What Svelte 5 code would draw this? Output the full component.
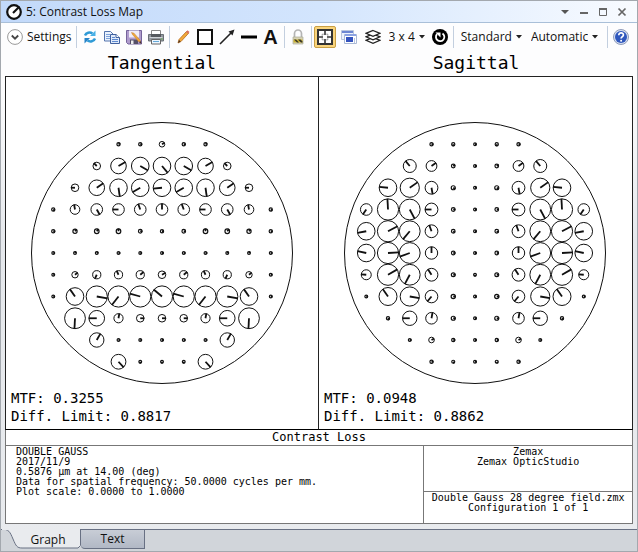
<script>
    let layout = '3 x 4'
    let lineStyle = 'Standard'
    let scaling = 'Automatic'
    let tab = 'Graph'

    // one entry per pupil point: [radius, clock angle], the right half mirrors the left
    const tangential = [
        [null, null, null, [2, 60], [2, 90], [3, 60]],
        [null, null, [4, 315], [8, 60], [9, 120], [9, 140]],
        [null, [4, 270], [8, 55], [9, 172], [9, 240], [9, 265]],
        [[2, 130], [5, 350], [6, 150], [6, 270], [6, 340], [6, 0]],
        [[2, 90], [2.5, 40], [2.7, 40], [2.7, 0], [2.2, 90], [2, 90]],
        [[1.8, 90], [1.8, 30], [1.8, 60], [1.8, 90], [1.8, 90], [1.8, 90]],
        [[1.8, 90], [3.4, 50], [4.3, 205], [4.3, 335], [4.3, 50], [4, 60]],
        [[1.8, 90], [9, 325], [10.8, 100], [10.8, 218], [10.8, 285], [10.8, 310]],
        [null, [10.6, 183], [8, 270], [4.8, 10], [4, 90], [4, 90]],
        [null, null, [7.4, 30], [1.8, 90], [1.8, 90], [1.8, 90]],
        [null, null, null, [7.6, 137], [1.8, 180], [1.8, 180]]
    ]

    const sagittal = [
        [null, null, null, [2, 90], [2, 180], [1.7, 90]],
        [null, null, [6.7, 320], [5.6, 55], [2.2, 60], [1.8, 90]],
        [null, [9, 275], [9.8, 55], [6.6, 170], [2.4, 120], [1.8, 90]],
        [[6, 215], [10.8, 357], [10.6, 152], [6.6, 270], [2.2, 90], [1.8, 90]],
        [[9, 260], [10.8, 62], [10.6, 220], [6.6, 340], [2.2, 130], [1.8, 90]],
        [[9, 282], [10.8, 87], [10.6, 250], [6.4, 0], [2.2, 90], [1.8, 90]],
        [[5.2, 275], [10.8, 60], [10.6, 208], [6.6, 327], [2.3, 90], [1.8, 180]],
        [[1.8, 90], [9.2, 325], [9.8, 100], [6.5, 220], [2.5, 90], [1.8, 90]],
        [null, [2, 150], [7.4, 270], [6, 10], [2.4, 90], [1.8, 90]],
        [null, null, [1.8, 90], [3, 60], [2, 90], [1.8, 90]],
        [null, null, null, [2, 90], [1.9, 150], [1.8, 90]]
    ]

    const step = 21.75

    function points(rows) {
        let list = []
        rows.forEach((row, r) => {
            for (let c = 0; c < 11; c++) {
                const point = row[c > 5 ? 10 - c : c]
                if (!point) continue
                const x = 156 + (c - 5) * step
                const y = 131 + (r - 5) * step
                const a = point[1] * Math.PI / 180
                list.push({
                    x, y, r: point[0],
                    x2: x + Math.sin(a) * point[0],
                    y2: y - Math.cos(a) * point[0]
                })
            }
        })
        return list
    }

    const plots = [
        { name: 'Tangential', mtf: '0.3255', limit: '0.8817', points: points(tangential) },
        { name: 'Sagittal', mtf: '0.0948', limit: '0.8862', points: points(sagittal) }
    ]
</script>

<div class="window">
    <header class="titlebar">
        <svg width="18" height="18" viewBox="0 0 18 18" aria-hidden="true">
            <circle cx="9" cy="9" r="6.8" fill="#fff" stroke="#111" stroke-width="2.2" />
            <path d="M8 10 L14.5 3.5" stroke="#111" stroke-width="2.2" />
        </svg>
        <h1>5: Contrast Loss Map</h1>
        <div class="window-buttons">
            <button aria-label="Window menu"><svg width="10" height="10" viewBox="0 0 10 10"><path d="M1 3h8L5 7z" fill="#555" /></svg></button>
            <button aria-label="Minimize"><svg width="10" height="10" viewBox="0 0 10 10"><path d="M1 6h8" stroke="#666" stroke-width="2" /></svg></button>
            <button aria-label="Maximize"><svg width="10" height="10" viewBox="0 0 10 10"><path d="M1.5 2h7v6.500h-7z" fill="none" stroke="#666" /><path d="M1 2h8" stroke="#666" stroke-width="2" /></svg></button>
            <button aria-label="Close"><svg width="10" height="10" viewBox="0 0 10 10"><path d="M1.500 1.500l7 7M8.500 1.500l-7 7" stroke="#666" stroke-width="1.700" /></svg></button>
        </div>
    </header>

    <div class="toolbar" role="toolbar" aria-label="Graph tools">
        <button class="settings">
            <svg width="16" height="16" viewBox="0 0 16 16">
                <circle cx="8" cy="8" r="7.400" fill="#fff" stroke="#999" />
                <path d="M4.800 6.500L8 9.700l3.200-3.200" fill="none" stroke="#444" stroke-width="1.800" />
            </svg>
            <span>Settings</span>
        </button>
        <span class="sep"></span>
        <button class="tool" aria-label="Update">
            <svg width="16" height="16" viewBox="0 0 16 16" fill="none" stroke="#2f9ad6" stroke-width="2.400">
                <path d="M3 6.500C4 3.500 8 2.800 10.500 4.500" />
                <path d="M13.500 1.500v5.500H8z" fill="#48b0e6" stroke="none" />
                <path d="M13 9.500C12 12.500 8 13.200 5.500 11.500" />
                <path d="M2.500 14.500V9H8z" fill="#2683c8" stroke="none" />
            </svg>
        </button>
        <button class="tool" aria-label="Copy">
            <svg width="16" height="16" viewBox="0 0 16 16">
                <path d="M.5 2.500h6l3 3v6.500h-9z" fill="#eaf2fd" stroke="#5474ad" />
                <path d="M2 5.500h4M2 7.500h5M2 9.500h5" stroke="#7fa3dc" />
                <path d="M6.500 5.500h5.500l3.500 3v6h-9z" fill="#dfeafb" stroke="#40619f" />
                <path d="M12 5.500v3h3.500" fill="#fff" stroke="#40619f" />
                <path d="M8 8.500h3M8 10.500h6M8 12.500h6" stroke="#5e8ad0" />
            </svg>
        </button>
        <button class="tool" aria-label="Save">
            <svg width="16" height="16" viewBox="0 0 16 16">
                <path d="M.5 1.500h15v13.500H2L.5 13.500z" fill="#b09ccd" stroke="#75649b" />
                <path d="M3 1.500h10v7H3z" fill="#f1ecf8" />
                <path d="M4 10.500h8V15H4z" fill="#565068" /><path d="M5 11.500h2.500V15H5z" fill="#eee" />
                <path d="M5.500 3.500l1 2 6.500 7.500 1.500-1.300L8 4.200z" fill="#f0a638" stroke="#c07c2d" stroke-width=".5" />
                <path d="M13 13.300l2.500 1.700-.7-3z" fill="#503324" />
            </svg>
        </button>
        <button class="tool" aria-label="Print">
            <svg width="16" height="16" viewBox="0 0 16 16">
                <path d="M3.500 1.500h9v5h-9z" fill="#fff" stroke="#888" />
                <path d="M.5 5.500h15v6.500H.5z" fill="#94999f" stroke="#6a7076" />
                <path d="M3 5h10v3H3z" fill="#55595e" /><path d="M1.500 8.500h13" stroke="#cfd3d7" />
                <path d="M3.500 10.500h9v4.500h-9z" fill="#edf6ff" stroke="#666" />
                <path d="M5 12.500h6" stroke="#66a9d8" /><path d="M13 10h1.500" stroke="#5dbb45" />
            </svg>
        </button>
        <span class="sep"></span>
        <button class="tool" aria-label="Draw">
            <svg width="16" height="16" viewBox="0 0 16 16">
                <path d="M3 14l1-3.500 7.500-8 2 1.800-7.500 8.200z" fill="#f2aa3a" stroke="#b5681e" stroke-width=".8" />
                <path d="M11 3l1.500-1.800 2 1.700L13 4.800z" fill="#d97060" />
                <path d="M3 14l1-3 1.700 1.500z" fill="#4b3526" />
            </svg>
        </button>
        <button class="tool" aria-label="Rectangle">
            <svg width="16" height="16" viewBox="0 0 16 16"><path d="M1 1h14v14H1z" fill="#fff" stroke="#111" stroke-width="2" /></svg>
        </button>
        <button class="tool" aria-label="Arrow">
            <svg width="16" height="16" viewBox="0 0 16 16"><path d="M1 15L12 4" stroke="#222" stroke-width="1.600" /><path d="M15.500.5L13.500 6.500 9.500 2.500z" fill="#222" /></svg>
        </button>
        <button class="tool" aria-label="Line">
            <svg width="16" height="16" viewBox="0 0 16 16"><path d="M0 8h16" stroke="#000" stroke-width="3" /></svg>
        </button>
        <button class="tool letter" aria-label="Text annotation">A</button>
        <span class="sep"></span>
        <button class="tool" aria-label="Lock">
            <svg width="16" height="16" viewBox="0 0 16 16">
                <path d="M4.500 9V4.500a3.500 3.500 0 0 1 7 0V9" fill="none" stroke="#b4b4b4" stroke-width="1.700" />
                <path d="M3 8h10v7H3z" fill="#d8d3b4" stroke="#aaa999" stroke-width=".7" />
                <path d="M3.500 10.500h9v3h-9z" fill="#c8b030" />
                <path d="M4 10.500l3 3h2l-3-3M8 10.500l3 3h1.500v-1l-2-2" fill="#383629" />
            </svg>
        </button>
        <span class="sep"></span>
        <div class="views">
            <button class="tool active" aria-label="Fit to window" aria-pressed="true">
                <svg width="16" height="16" viewBox="0 0 16 16">
                    <path d="M1 1h14v14H1z" fill="#fff" stroke="#333" stroke-width="2" />
                    <path d="M8 2v4M8 10v4M2 8h4M10 8h4" stroke="#333" stroke-width="1.600" />
                    <path d="M6 4.500v1.500H4.500M10 4.500v1.500h1.500M6 11.500V10H4.500M10 11.500V10h1.500" fill="none" stroke="#777" stroke-width=".8" />
                </svg>
            </button>
            <button class="tool" aria-label="Clone window">
                <svg width="16" height="16" viewBox="0 0 16 16">
                    <path d="M.5 1.500h12v9H.5z" fill="#eef3fc" stroke="#b9c5dc" /><path d="M1 2h11v2H1z" fill="#6d87d2" />
                    <path d="M3.500 5.500h12v9h-12z" fill="#fff" stroke="#aab9d5" /><path d="M4 5h11v2H4z" fill="#8ca3e2" />
                    <path d="M5 8h7v5H5z" fill="#3453bd" /><path d="M13.500 9v5" stroke="#b8c5df" />
                </svg>
            </button>
            <button class="tool" aria-label="Layers">
                <svg width="16" height="16" viewBox="0 0 16 16" fill="#fff" stroke="#222" stroke-width="1.300">
                    <path d="M8 8.500l7 2.800-7 3-7-3z" /><path d="M8 5l7 2.800-7 3-7-3z" /><path d="M8 1.500l7 2.800-7 3-7-3z" />
                </svg>
            </button>
        </div>
        <label class="dropdown">
            <select bind:value={layout} aria-label="Window size">
                <option>3 x 4</option>
                <option>2 x 3</option>
            </select>
            <svg width="6" height="4" viewBox="0 0 6 4"><path d="M0 0h6L3 3.500z" fill="#222" /></svg>
        </label>
        <button class="tool" aria-label="Reset">
            <svg width="16" height="16" viewBox="0 0 16 16">
                <circle cx="8" cy="8" r="8" fill="#000" />
                <path d="M10.500 4.500A4.200 4.200 0 1 1 5 5.200" fill="none" stroke="#fff" stroke-width="1.800" />
                <path d="M3.500 3.500h5v5z" fill="#fff" />
            </svg>
        </button>
        <span class="sep"></span>
        <label class="dropdown">
            <select bind:value={lineStyle} aria-label="Line thickness">
                <option>Standard</option>
                <option>Thin</option>
            </select>
            <svg width="6" height="4" viewBox="0 0 6 4"><path d="M0 0h6L3 3.500z" fill="#222" /></svg>
        </label>
        <label class="dropdown">
            <select bind:value={scaling} aria-label="Scaling">
                <option>Automatic</option>
                <option>Fixed</option>
            </select>
            <svg width="6" height="4" viewBox="0 0 6 4"><path d="M0 0h6L3 3.500z" fill="#222" /></svg>
        </label>
        <span class="sep last"></span>
        <button class="tool" aria-label="Help">
            <svg width="16" height="16" viewBox="0 0 16 16">
                <circle cx="8" cy="8" r="7.500" fill="#d7dff0" stroke="#8f9cba" />
                <circle cx="8" cy="8" r="6" fill="#2f57bd" />
                <path d="M5.800 6.200c0-3.300 4.700-3 4.600-.2 0 1.700-2.300 1.600-2.300 3.600" fill="none" stroke="#fff" stroke-width="1.700" />
                <circle cx="8.100" cy="11.800" r="1" fill="#fff" />
            </svg>
        </button>
    </div>

    <main>
        <div class="plots">
            {#each plots as plot}
                <section>
                    <h2>{plot.name}</h2>
                    <div class="panel">
                        <svg class="map" viewBox="0 0 312 262" role="img" aria-label="{plot.name} contrast loss map">
                            <circle cx="156" cy="131" r="130.5" />
                            {#each plot.points as p}
                                <circle class:dot={p.r < 3} cx={p.x} cy={p.y} r={p.r < 3 ? p.r - 0.4 : p.r - 0.2} />
                                <line x1={p.x} y1={p.y} x2={p.x2} y2={p.y2} />
                            {/each}
                        </svg>
                        <p>MTF: {plot.mtf}</p>
                        <p>Diff. Limit: {plot.limit}</p>
                    </div>
                </section>
            {/each}
        </div>

        <div class="info">
            <h3>Contrast Loss</h3>
            <div class="details">
                <div class="data">
                    <p>DOUBLE GAUSS</p>
                    <p>2017/11/9</p>
                    <p>0.5876 µm at 14.00 (deg)</p>
                    <p>Data for spatial frequency: 50.0000 cycles per mm.</p>
                    <p>Plot scale: 0.0000 to 1.0000</p>
                </div>
                <div class="source">
                    <div class="program">
                        <p>Zemax</p>
                        <p>Zemax OpticStudio</p>
                    </div>
                    <div class="file">
                        <p>Double Gauss 28 degree field.zmx</p>
                        <p>Configuration 1 of 1</p>
                    </div>
                </div>
            </div>
        </div>
    </main>

    <nav class="tabs">
        <button class="graph" aria-pressed={tab == 'Graph'} on:click={() => tab = 'Graph'}>
            <svg width="80" height="20" viewBox="0 0 80 20" aria-hidden="true">
                <path d="M0 0C8 0 9 3 12 10 15 17 16 19 21 19H77L79.500 16.500V0" fill="#e9ebee" stroke="#687083" />
                <path d="M1 0H79" stroke="#e9ebee" stroke-width="2" />
            </svg>
            <span>Graph</span>
        </button>
        <button class="text" aria-pressed={tab == 'Text'} on:click={() => tab = 'Text'}>Text</button>
    </nav>
</div>

<style>
    :global(body) {
        margin: 0;
        background: #fff;
    }

    .window {
        box-sizing: border-box;
        min-height: 100vh;
        display: flex;
        flex-direction: column;
        border: 1px solid #a3a8ae;
        background: linear-gradient(#fdfdfe 80px, #e5e8ec 240px, #e9ebee);
        font-family: "Open Sans", "Noto Sans", sans-serif;
        font-size: 12px;
        color: #111;
    }

    h1, h2, h3, p {
        margin: 0;
        font-weight: normal;
    }

    button, select {
        font: inherit;
        color: inherit;
        border: 0;
        padding: 0;
        background: none;
    }

    svg {
        display: block;
        flex: none;
    }

    .titlebar {
        display: flex;
        align-items: center;
        gap: 3px;
        height: 21px;
        padding: 0 10px 0 4px;
        border-bottom: 1px solid #a9bfd8;
        background: linear-gradient(90deg, #c2d9fa, #d3e5fd 50%, #f8fbff);
    }

    .titlebar h1 {
        flex: 1;
        font-size: 12px;
        line-height: 20px;
    }

    .window-buttons {
        display: flex;
        gap: 9px;
    }

    .toolbar {
        display: flex;
        align-items: center;
        height: 27px;
        padding: 0 5px;
    }

    .settings {
        display: flex;
        align-items: center;
        gap: 4px;
        padding: 0 2px 0 1px;
    }

    .sep {
        width: 1px;
        height: 22px;
        margin: 0 2px;
        background: #c3cfdf;
    }

    .last {
        margin-left: auto;
    }

    .tool {
        box-sizing: border-box;
        width: 22px;
        height: 22px;
        display: flex;
        align-items: center;
        justify-content: center;
    }

    .letter {
        font-family: "Liberation Sans", sans-serif;
        font-size: 20px;
        font-weight: bold;
        line-height: 20px;
    }

    .active {
        border: 1px solid #c99f44;
        border-radius: 2px;
        background: #f9d47c;
    }

    .views {
        display: flex;
        gap: 2px;
    }

    .dropdown {
        display: flex;
        align-items: center;
        gap: 4px;
        padding: 0 4px 0 5px;
    }

    select {
        appearance: none;
        field-sizing: content;
        outline: 0;
    }

    main {
        flex: 1;
        display: flex;
        flex-direction: column;
        padding: 0 4px 5px;
        font-family: "DejaVu Sans Mono", monospace;
        color: #000;
    }

    .plots {
        display: grid;
        grid-template-columns: 1fr 1fr;
    }

    h2 {
        font-size: 18px;
        line-height: 26px;
        text-align: center;
    }

    .panel {
        padding: 45px 0 4px;
        border: 1px solid #222;
        border-bottom-color: #000;
        background: #fff;
    }

    section + section .panel {
        border-left: 0;
        padding-right: 1px;
    }

    .panel p {
        padding-left: 5px;
        font-size: 14px;
        line-height: 18px;
    }

    .map {
        width: 100%;
        margin-bottom: 5px;
        fill: none;
        stroke: #111;
    }

    .map line {
        stroke-width: 1.8;
    }

    .map .dot {
        stroke-width: 1.2;
    }

    .info {
        flex: 1;
        display: flex;
        flex-direction: column;
        border: 1px solid #777;
        border-top: 0;
        background: #fff;
    }

    h3 {
        font-size: 12px;
        line-height: 15px;
        text-align: center;
        border-bottom: 1px solid #777;
    }

    .details {
        flex: 1;
        display: grid;
        grid-template-columns: 2fr 1fr;
        font-size: 10px;
        line-height: 10px;
    }

    .data {
        padding: 1px 10px;
    }

    .source {
        display: flex;
        flex-direction: column;
        border-left: 1px solid #777;
        text-align: center;
    }

    .program {
        flex: 3;
        padding-top: 1px;
        border-bottom: 1px solid #777;
    }

    .file {
        flex: 2;
        padding-top: 1px;
    }

    .tabs {
        display: flex;
        align-items: flex-start;
        height: 21px;
        border-top: 1px solid #687083;
        background: #d1d5da;
    }

    .tabs button {
        position: relative;
        height: 19px;
        line-height: 18px;
    }

    .graph {
        width: 80px;
        padding-left: 14px;
    }

    .graph svg {
        position: absolute;
        left: 0;
        top: -1px;
    }

    .graph span {
        position: relative;
    }

    .tabs .text {
        box-sizing: border-box;
        width: 64px;
        border: 1px solid #687083;
        border-width: 0 1px 1px 0;
        border-bottom-left-radius: 4px;
        background: linear-gradient(#c8cdd6, #b1b8c5);
    }
</style>
